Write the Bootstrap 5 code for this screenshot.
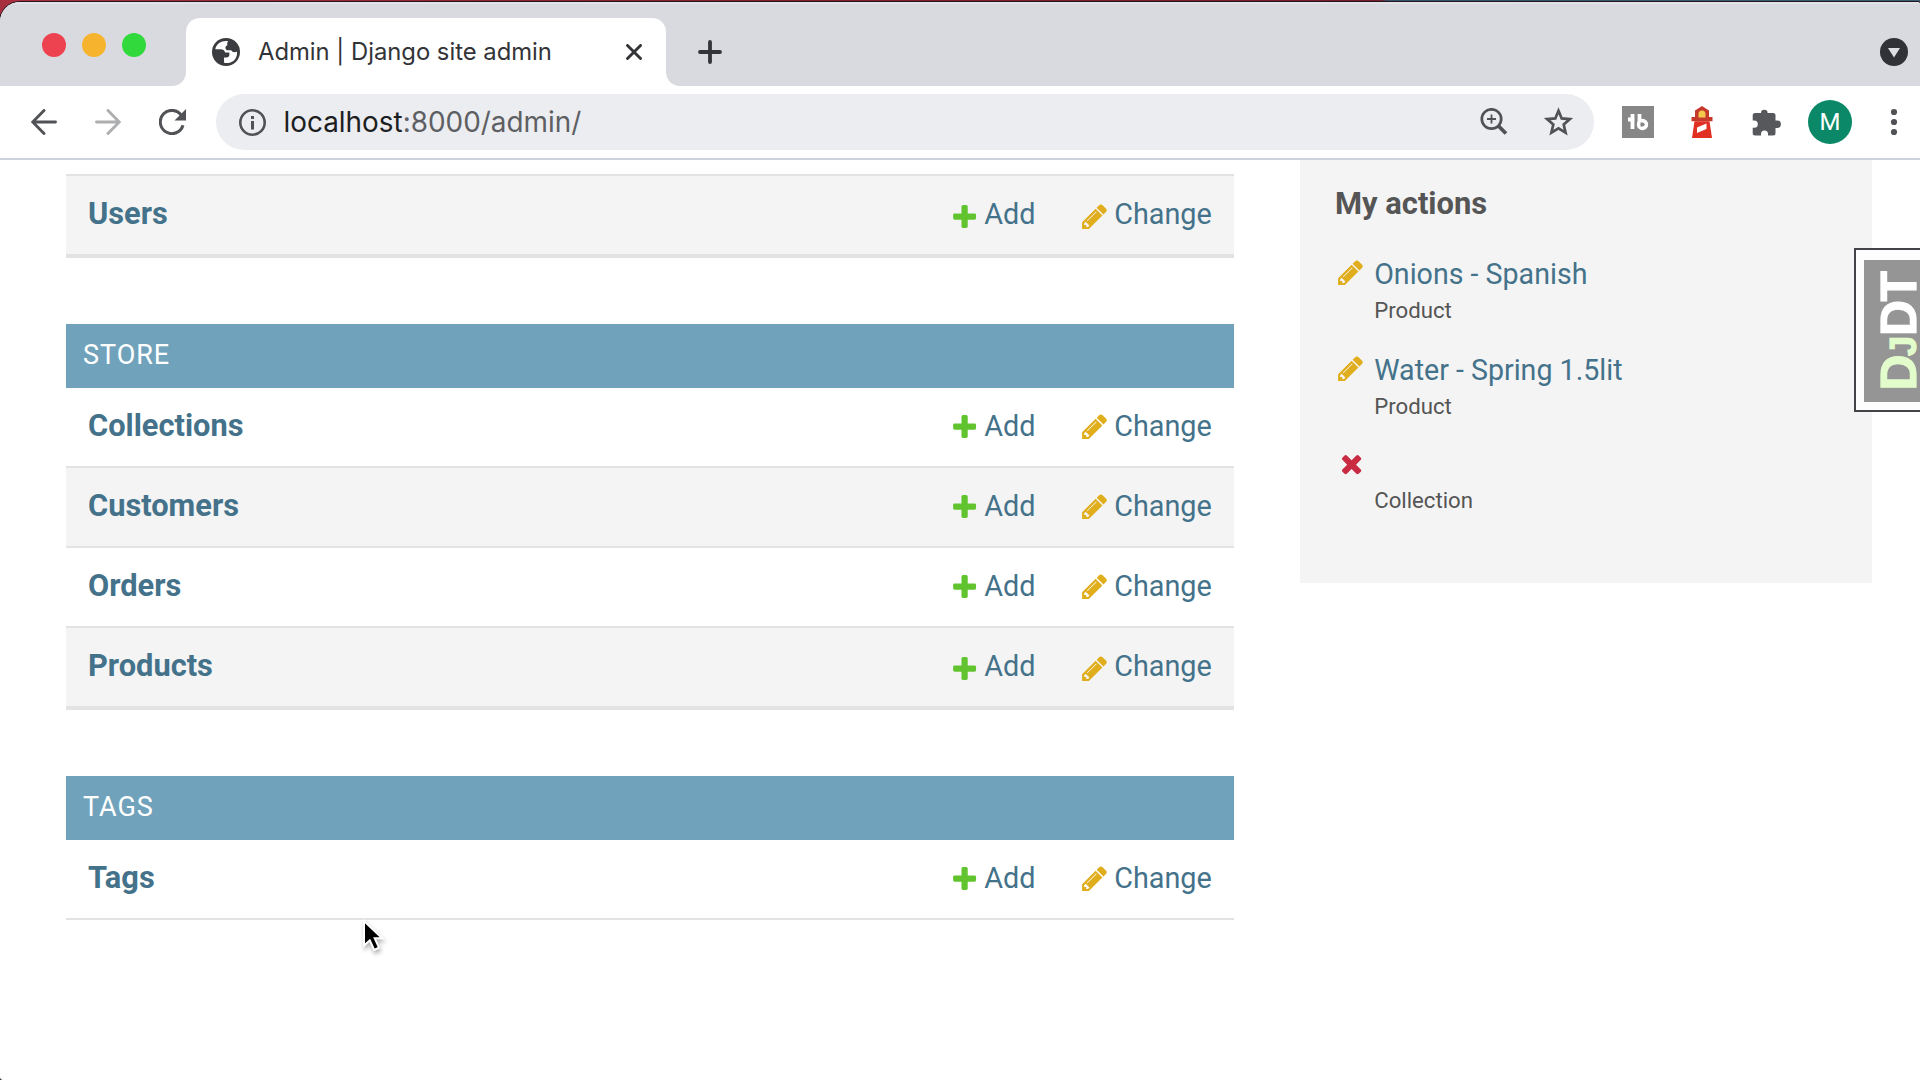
<!DOCTYPE html>
<html lang="en">
<head>
<meta charset="utf-8">
<title>Admin | Django site admin</title>
<link href="https://cdn.jsdelivr.net/npm/bootstrap@5.3.0/dist/css/bootstrap.min.css" rel="stylesheet">
<script src="https://cdn.jsdelivr.net/npm/bootstrap@5.3.0/dist/js/bootstrap.bundle.min.js"></script>
<style>
  body { width: 1920px; height: 1080px; overflow: hidden; font-family: Roboto, sans-serif;
    background: linear-gradient(90deg, #a82f40 0, #83212f 40%, #7a1d2c 1380px, #345269 1388px, #3c5f74 100%) 0 0 / 100% 24px no-repeat, #3a3d42; }
  .browser { height: 1078px; margin-top: 2px; border-radius: 20px 3px 0 3px; background: #fff; overflow: hidden; box-shadow: 0 0 0 1px #25151c; position: relative; }
  .tabstrip { height: 84px; background: #d9dadf; border-top: 2px solid #e2e3e9; }
  .lights { width: 186px; padding: 29px 0 0 42px; gap: 16px; }
  .lights i { width: 24px; height: 24px; border-radius: 50%; }
  .light-close { background: #ed4250; }
  .light-min { background: #f6b32d; }
  .light-max { background: #31d93d; }
  .tab { width: 480px; height: 68px; margin-top: 14px; background: #fff; border-radius: 14px 14px 0 0; position: relative; padding: 0 24px 0 26px; }
  .tab::before, .tab::after { content: ""; position: absolute; bottom: 0; width: 14px; height: 14px; }
  .tab::before { left: -14px; background: radial-gradient(circle at 0 0, transparent 13.5px, #fff 14.5px); }
  .tab::after { right: -14px; background: radial-gradient(circle at 100% 0, transparent 13.5px, #fff 14.5px); }
  .tab-title { font: 400 23.8px/32px Inter, sans-serif; color: #333437; margin-left: 18px; }
  .new-tab { margin: 36px 0 0 32px; }
  .tab-search { margin: 34px 12px 0 0; }
  .toolbar { height: 74px; border-bottom: 2px solid #ced2dc; padding: 8px 19px 8px 31px; }
  .toolbar svg, .toolbar .avatar { flex: none; }
  .nav-gap { margin-left: 38px; }
  .omnibox { width: 1378px; height: 56px; margin-left: 30px; border-radius: 28px; background: #ecedf1; padding: 0 20px 0 23px; }
  .url { font: 400 27.900px/36px Inter, sans-serif; color: #5d5f63; margin-left: 17.500px; }
  .url span { color: #1d1e21; }
  .star { margin-left: 35px; }
  .ext-tb { margin-left: 28px; }
  .ext-lh { margin-left: 37px; }
  .ext-all { margin-left: 39px; }
  .avatar { width: 44px; height: 44px; margin-left: 27px; border-radius: 50%; background: #0b8867; color: #fff; font-size: 24px; line-height: 44px; }
  .page { padding: 14px 48px 0 66px; gap: 66px; }
  .apps { width: 1168px; }
  .module { margin-bottom: 66px; }
  .module.ruled { border-bottom: 2px solid #e3e3e3; }
  .module h2 { height: 64px; margin: 0; padding: 0 17px; font-size: 27px; line-height: 63px; letter-spacing: .95px; font-weight: 400; color: #fff; background: #70a3bb; }
  .model { height: 80px; border-bottom: 2px solid #e3e3e3; padding-left: 22px; }
  .model.striped { background: #f4f4f4; }
  .model.first { border-top: 2px solid #e3e3e3; height: 82px; }
  a { color: #44728a; text-decoration: none; }
  .model-name { font-weight: 700; font-size: 30.800px; line-height: 36px; margin-top: 20px; }
  .act { font-size: 28.8px; line-height: 36px; padding-top: 20px; }
  .act svg { margin: 4px 5px 0 0; }
  .low .act svg { margin-top: 6px; }
  .act-add { width: 130px; }
  .act-change { width: 154px; }
  .ico { width: 29.2px; height: 29.2px; flex: none; }
  .recent { width: 572px; height: 423px; margin-top: -14px; background: #f4f4f4; padding: 26px 34px 25px 35px; color: #555; }
  .recent h3 { font-weight: 700; font-size: 30.900px; line-height: 36px; margin: 0 0 34px; }
  .entry { height: 96px; gap: 9px; padding-left: 1px; }
  .entry .ico { margin-top: 2px; }
  .entry .ico-del { margin: 1px -1px 0 1px; }
  .entry a { display: block; height: 40px; font-size: 28.6px; line-height: 36px; }
  .entry .blank { height: 38px; }
  .entry .kind { font-size: 22.2px; line-height: 28px; }
  .djdt { position: absolute; left: 1854px; top: 246px; }
  .pointer { position: absolute; left: 359px; top: 914px; filter: drop-shadow(1px 3px 2px rgba(0,0,0,.3)); }
</style>
</head>
<body>
<svg width="0" height="0" class="d-none">
  <symbol id="add" viewBox="0 0 1792 1792"><path fill="#61c42f" d="M1600 796v192q0 40-28 68t-68 28h-416v416q0 40-28 68t-68 28h-192q-40 0-68-28t-28-68v-416h-416q-40 0-68-28t-28-68v-192q0-40 28-68t68-28h416v-416q0-40 28-68t68-28h192q40 0 68 28t28 68v416h416q40 0 68 28t28 68z"/></symbol>
  <symbol id="edit" viewBox="0 0 1792 1792"><path fill="#e0ae1c" d="M491 1536l91-91-235-235-91 91v107h128v128h107zm523-928q0-22-22-22-10 0-17 7l-542 542q-7 7-7 17 0 22 22 22 10 0 17-7l542-542q7-7 7-17zm-54-192l416 416-832 832h-416v-416zm683 96q0 53-37 90l-166 166-416-416 166-165q36-38 90-38 53 0 91 38l235 234q37 39 37 91z"/></symbol>
  <symbol id="del" viewBox="0 0 1792 1792"><path fill="#c92b42" d="M1490 1322q0 40-28 68l-136 136q-28 28-68 28t-68-28l-294-294-294 294q-28 28-68 28t-68-28l-136-136q-28-28-28-68t28-68l294-294-294-294q-28-28-28-68t28-68l136-136q28-28 68-28t68 28l294 294 294-294q28-28 68-28t68 28l136 136q28 28 28 68t-28 68l-294 294 294 294q28 28 28 68z"/></symbol>
</svg>
<div class="browser">
  <header class="tabstrip d-flex align-items-start">
    <div class="lights d-flex"><i class="light-close"></i><i class="light-min"></i><i class="light-max"></i></div>
    <div class="tab d-flex align-items-center">
      <svg width="28" height="28" viewBox="2 2 20 20"><circle cx="12" cy="12" r="10" fill="#3b3c3f"/><path fill="#fff" d="M12.700 4.100c-4.200-.3-7.300 2-8.300 5.400l.1.600h3.700c1.700 0 2.700.8 3.200 2.200h3v1.700c0 1.200-.9 2-2 2h-1.800v3.600c4 1.300 8.500-1.300 9.200-5.700.1-.800.1-1.500 0-2.200-1.100.8-3.500.6-4.100-.9h-2.200c-1.100 0-1.900-.8-1.900-1.900 0-.9.500-1.500 1.300-1.800V5.600c0-.7.300-1.200.8-1.500z"/></svg>
      <span class="tab-title text-nowrap">Admin | Django site admin</span>
      <svg class="ms-auto" width="16" height="16" viewBox="0 0 16 16"><path d="M1.500 1.500l13 13M14.500 1.500l-13 13" stroke="#333437" stroke-width="2.900" stroke-linecap="round"/></svg>
    </div>
    <svg class="new-tab" width="24" height="24" viewBox="0 0 24 24"><path d="M12 2v20M2 12h20" stroke="#333437" stroke-width="3.800" stroke-linecap="round"/></svg>
    <svg class="tab-search ms-auto" width="28" height="28" viewBox="0 0 28 28"><circle cx="14" cy="14" r="14" fill="#303238"/><path fill="#dedfe3" d="M8 10h12l-6 9.500z"/></svg>
  </header>

  <nav class="toolbar d-flex align-items-center">
    <svg width="26" height="26" viewBox="0 0 26 26" fill="none" stroke="#505255" stroke-width="2.900" stroke-linecap="round"><path d="M24.500 13H2M13 1.500L1.700 13 13 24.500"/></svg>
    <svg class="nav-gap" width="26" height="26" viewBox="0 0 26 26" fill="none" stroke="#adaeb0" stroke-width="2.900" stroke-linecap="round"><path d="M1.500 13H24M13 1.500L24.300 13 13 24.500"/></svg>
    <svg class="nav-gap" width="27" height="26" viewBox="0 0 27 26"><path d="M22.500 6.500A11.600 11.600 0 1 0 24 16.300" fill="none" stroke="#505255" stroke-width="3"/><path fill="#505255" d="M27 0v11.500H15.500z"/></svg>
    <div class="omnibox d-flex align-items-center">
      <svg width="27" height="27" viewBox="0 0 27 27"><circle cx="13.500" cy="13.500" r="12.200" fill="none" stroke="#505255" stroke-width="2.600"/><path fill="#505255" d="M12 7h3v3h-3zM12 12h3v8.500h-3z"/></svg>
      <span class="url"><span>localhost</span>:8000/admin/</span>
      <svg class="ms-auto" width="28" height="28" viewBox="0 0 28 28" fill="none" stroke="#505255"><circle cx="11.500" cy="11" r="9.700" stroke-width="2.700"/><path d="M18.500 18l7.500 7.500" stroke-width="3.800"/><path d="M11.500 6.500v9M7 11h9" stroke-width="1.800"/></svg>
      <svg class="star" width="31" height="30" viewBox="0 0 31 30"><path d="M15.500 3.800l3.200 7.600 8.200.7-6.200 5.400 1.900 8.100-7.100-4.300-7.100 4.300 1.900-8.100-6.200-5.400 8.200-.7z" fill="none" stroke="#505255" stroke-width="2.700"/></svg>
    </div>
    <svg class="ext-tb" width="32" height="32" viewBox="0 0 32 32"><path fill="#878787" d="M0 0h32v32H0z"/><path fill="none" stroke="#fff" stroke-width="3.800" d="M10.500 8v15M6 13.500h6.500M17.500 8v13"/><circle cx="20.500" cy="18.500" r="3.900" fill="#878787" stroke="#fff" stroke-width="3.600"/><path fill="#878787" d="M18.700 16l4.200 2.500-4.200 2.500z"/></svg>
    <svg class="ext-lh" width="22" height="32" viewBox="0 0 22 32"><path fill="#c63a2c" d="M11 0l7 4.500V11h3.500v4.200H.5V11H4V4.500z"/><path fill="#e12f22" d="M3.500 15.200h15L21 32H1z"/><path fill="#f5c94c" d="M11 4.500a3.500 3.500 0 0 1 3.500 3.500v3.500h-7V8A3.500 3.500 0 0 1 11 4.500z"/><path fill="#fff" d="M6 21.500l9.500-4v5.500L6 27z"/></svg>
    <svg class="ext-all" width="29" height="28" viewBox="0 0 29 28"><path fill="#56585c" d="M8.500 5h.5a3.300 3.300 0 0 1 6.600 0h5.700c1.300 0 2.200 1 2.200 2.200v5.300h1.700a3.700 3.700 0 0 1 0 7.400h-1.700v5.400c0 1.300-1 2.300-2.200 2.300H16v-1.500a3.500 3.500 0 0 0-7 0v1.500H3C1.600 27.600.7 26.600.7 25.300v-5.500h1.500a3.600 3.600 0 0 0 0-7.200H.7V7.200C.7 6 1.600 5 3 5z"/></svg>
    <span class="avatar text-center">M</span>
    <svg class="ms-auto" width="14" height="28" viewBox="0 0 14 28" fill="#505255"><circle cx="7" cy="4" r="3.100"/><circle cx="7" cy="14" r="3.100"/><circle cx="7" cy="24" r="3.100"/></svg>
  </nav>

  <main class="page d-flex align-items-start">
    <div class="apps">
      <section class="module ruled">
        <div class="model striped first low d-flex align-items-start">
          <a href="#" class="model-name me-auto">Users</a>
          <a href="#" class="act act-add d-flex align-items-start"><svg class="ico"><use href="#add"/></svg>Add</a>
          <a href="#" class="act act-change d-flex align-items-start"><svg class="ico"><use href="#edit"/></svg>Change</a>
        </div>
      </section>
      <section class="module ruled">
        <h2>STORE</h2>
        <div class="model d-flex align-items-start">
          <a href="#" class="model-name me-auto">Collections</a>
          <a href="#" class="act act-add d-flex align-items-start"><svg class="ico"><use href="#add"/></svg>Add</a>
          <a href="#" class="act act-change d-flex align-items-start"><svg class="ico"><use href="#edit"/></svg>Change</a>
        </div>
        <div class="model striped d-flex align-items-start">
          <a href="#" class="model-name me-auto">Customers</a>
          <a href="#" class="act act-add d-flex align-items-start"><svg class="ico"><use href="#add"/></svg>Add</a>
          <a href="#" class="act act-change d-flex align-items-start"><svg class="ico"><use href="#edit"/></svg>Change</a>
        </div>
        <div class="model d-flex align-items-start">
          <a href="#" class="model-name me-auto">Orders</a>
          <a href="#" class="act act-add d-flex align-items-start"><svg class="ico"><use href="#add"/></svg>Add</a>
          <a href="#" class="act act-change d-flex align-items-start"><svg class="ico"><use href="#edit"/></svg>Change</a>
        </div>
        <div class="model striped low d-flex align-items-start">
          <a href="#" class="model-name me-auto">Products</a>
          <a href="#" class="act act-add d-flex align-items-start"><svg class="ico"><use href="#add"/></svg>Add</a>
          <a href="#" class="act act-change d-flex align-items-start"><svg class="ico"><use href="#edit"/></svg>Change</a>
        </div>
      </section>
      <section class="module">
        <h2>TAGS</h2>
        <div class="model d-flex align-items-start">
          <a href="#" class="model-name me-auto">Tags</a>
          <a href="#" class="act act-add d-flex align-items-start"><svg class="ico"><use href="#add"/></svg>Add</a>
          <a href="#" class="act act-change d-flex align-items-start"><svg class="ico"><use href="#edit"/></svg>Change</a>
        </div>
      </section>
    </div>
    <aside class="recent">
      <h3>My actions</h3>
      <div class="entry d-flex align-items-start">
        <svg class="ico"><use href="#edit"/></svg>
        <div><a href="#">Onions - Spanish</a><div class="kind">Product</div></div>
      </div>
      <div class="entry d-flex align-items-start">
        <svg class="ico"><use href="#edit"/></svg>
        <div><a href="#">Water - Spring 1.5lit</a><div class="kind">Product</div></div>
      </div>
      <div class="entry d-flex align-items-start">
        <svg class="ico ico-del"><use href="#del"/></svg>
        <div><div class="blank"></div><div class="kind">Collection</div></div>
      </div>
    </aside>
  </main>

  <svg class="djdt" width="66" height="164" viewBox="0 0 66 164">
    <path fill="#fdfdfd" stroke="#454347" stroke-width="2" d="M70 1H1v162h69"/>
    <path fill="#959595" d="M10 12h56v142H10z"/>
    <g transform="translate(61.500 164) rotate(-90)" font-family="Liberation Sans, sans-serif" font-weight="700" stroke-width="1.200">
      <text fill="#e2fccb" stroke="#e2fccb" font-size="50"><tspan x="21.500">D</tspan><tspan x="56" font-size="36">J</tspan></text>
      <text fill="#fff" stroke="#fff" font-size="50"><tspan x="76">D</tspan><tspan x="110.500">T</tspan></text>
    </g>
  </svg>
  <svg class="pointer" width="30" height="40" viewBox="0 0 30 40"><path d="M5 5v24.500l5.800-5.200 4.400 9.600 4.800-2.200-4.300-9.400h7.500z" fill="#000" stroke="#fff" stroke-width="2"/></svg>
</div>
</body>
</html>
